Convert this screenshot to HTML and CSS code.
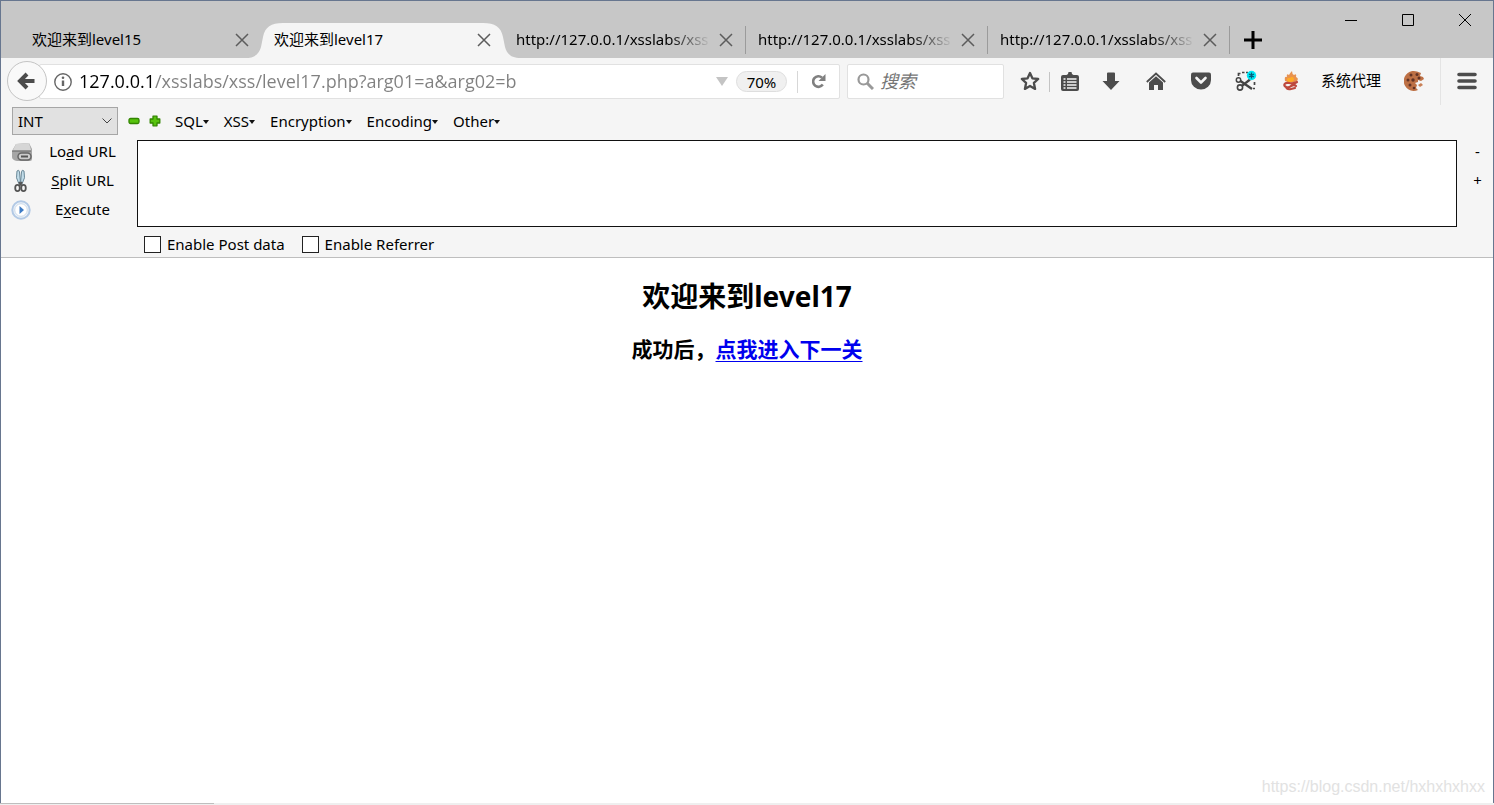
FILE: index.html
```html
<!DOCTYPE html>
<html lang="zh-CN">
<head>
<meta charset="utf-8">
<title>欢迎来到level17</title>
<link rel="stylesheet" href="styles.css">
</head>
<body>
<div class="window">
  <header class="titlebar">
    <div class="tabs">
      <div class="tab"><span class="tab-label">欢迎来到level15</span><button class="tab-close" aria-label="Close tab"><svg width="14" height="14" viewBox="0 0 14 14"><path d="M1 1L13 13M13 1L1 13"/></svg></button></div>
      <div class="tab active">
        <svg class="curve curve-left" width="38" height="35" viewBox="0 0 38 35"><path d="M0 35C10 35 14 31 16 24L18 14C20 4 26 0 38 0V35Z"/></svg>
        <svg class="curve curve-right" width="38" height="35" viewBox="0 0 38 35"><path d="M38 35C28 35 24 31 22 24L20 14C18 4 12 0 0 0V35Z"/></svg>
        <span class="tab-label">欢迎来到level17</span><button class="tab-close" aria-label="Close tab"><svg width="14" height="14" viewBox="0 0 14 14"><path d="M1 1L13 13M13 1L1 13"/></svg></button></div>
      <div class="tab divided"><span class="tab-label fade">http://127.0.0.1/xsslabs/xss</span><button class="tab-close" aria-label="Close tab"><svg width="14" height="14" viewBox="0 0 14 14"><path d="M1 1L13 13M13 1L1 13"/></svg></button></div>
      <div class="tab divided"><span class="tab-label fade">http://127.0.0.1/xsslabs/xss</span><button class="tab-close" aria-label="Close tab"><svg width="14" height="14" viewBox="0 0 14 14"><path d="M1 1L13 13M13 1L1 13"/></svg></button></div>
      <div class="tab divided"><span class="tab-label fade">http://127.0.0.1/xsslabs/xss</span><button class="tab-close" aria-label="Close tab"><svg width="14" height="14" viewBox="0 0 14 14"><path d="M1 1L13 13M13 1L1 13"/></svg></button></div>
      <button class="new-tab" aria-label="New tab"><svg width="18" height="18" viewBox="0 0 18 18"><path d="M9 0V18M0 9H18" stroke="#000" stroke-width="3"/></svg></button>
    </div>
    <div class="window-buttons">
      <button aria-label="Minimize"><svg width="14" height="14" viewBox="0 0 14 14"><path d="M1 7.500H13"/></svg></button>
      <button aria-label="Maximize"><svg width="14" height="14" viewBox="0 0 14 14"><path d="M1.500 1.500H12.500V12.500H1.500Z"/></svg></button>
      <button aria-label="Close"><svg width="14" height="14" viewBox="0 0 14 14"><path d="M1 1L13 13M13 1L1 13"/></svg></button>
    </div>
  </header>

  <nav class="navbar">
    <button class="back" aria-label="Back"><svg width="20" height="20" viewBox="0 0 20 20"><path d="M10 3L3 10L10 17M3.500 10H17.500" fill="none" stroke="#4c4c4c" stroke-width="4"/></svg></button>
    <div class="urlbar">
      <svg width="18" height="18" viewBox="0 0 18 18"><circle cx="9" cy="9" r="8.200" fill="none" stroke="#666" stroke-width="1.400"/><circle cx="9" cy="4.800" r="1.300" fill="#666"/><path d="M9 7.500V13" stroke="#666" stroke-width="2.400"/></svg>
      <input class="url" type="text" aria-label="Address" value="127.0.0.1/xsslabs/xss/level17.php?arg01=a&amp;arg02=b">
      <button class="history" aria-label="History"><svg width="12" height="9" viewBox="0 0 12 9"><path d="M0 0H12L6 9Z" fill="#c4c4c4"/></svg></button>
      <button class="zoom">70%</button>
      <button class="reload" aria-label="Reload"><svg width="14" height="15" viewBox="0 0 14 15"><path d="M10.800 10.600A5.300 5.300 0 1 1 10 3.600" fill="none" stroke="#808080" stroke-width="2.600"/><path d="M13.500 0V7H6.500Z" fill="#808080"/></svg></button>
    </div>
    <div class="searchbox">
      <svg width="17" height="17" viewBox="0 0 17 17"><circle cx="6.500" cy="6.500" r="5" fill="none" stroke="#999" stroke-width="2.200"/><path d="M10 10L16 16" stroke="#999" stroke-width="3"/></svg>
      <input class="search" type="text" aria-label="搜索" placeholder="搜索">
    </div>
    <button class="icon star" aria-label="Bookmark"><svg width="20" height="20" viewBox="0 0 20 20"><path d="M10 2L12.400 7.300L18.200 8L13.900 11.900L15.100 17.900L10 15L4.900 17.900L6.100 11.900L1.800 8L7.600 7.300Z" fill="none" stroke="#4c4c4c" stroke-width="2.300" stroke-linejoin="round"/></svg></button>
    <button class="icon list" aria-label="Library"><svg width="18" height="19" viewBox="0 0 18 19"><path d="M2 3H5.500L7 2L7.500 0H10.500L11 2L12.500 3H16A2 2 0 0 1 18 5V17A2 2 0 0 1 16 19H2A2 2 0 0 1 0 17V5A2 2 0 0 1 2 3Z" fill="#4c4c4c"/><path d="M2.500 7H4.500M6 7H15.500M2.500 10H4.500M6 10H15.500M2.500 13H4.500M6 13H15.500M2.500 16H4.500M6 16H15.500" stroke="#f5f5f5" stroke-width="1.700"/></svg></button>
    <div class="tools">
      <button class="icon" aria-label="Downloads"><svg width="18" height="19" viewBox="0 0 18 19"><path d="M6 0.500H12Q13 0.500 13 1.500V9H17.500L9 18L0.500 9H5V1.500Q5 0.500 6 0.500Z" fill="#4c4c4c"/></svg></button>
      <button class="icon" aria-label="Home"><svg width="20" height="19" viewBox="0 0 20 19"><path d="M0.800 10L10 1.500L19.200 10" fill="none" stroke="#4c4c4c" stroke-width="1.800"/><path d="M10 4.200L17 10.500V18H12V13H8V18H3V10.500Z" fill="#4c4c4c"/></svg></button>
      <button class="icon" aria-label="Pocket"><svg width="20" height="18" viewBox="0 0 20 18"><path d="M2 0.500H18Q20 0.500 20 2.500V8A10 9.500 0 0 1 0 8V2.500Q0 0.500 2 0.500Z" fill="#4c4c4c"/><path d="M5.500 6L10 10.500L14.500 6" fill="none" stroke="#f5f5f5" stroke-width="2.600" stroke-linecap="round" stroke-linejoin="round"/></svg></button>
      <button class="icon" aria-label="Capture"><svg width="22" height="22" viewBox="0 0 22 22"><g fill="none" stroke="#444"><path d="M3.500 6V3.500H5.500M7 2.500H9.500M11 2.500H13M19.500 12V15M18 18.500H20" stroke-width="1.700"/><circle cx="3.500" cy="10" r="2.200" stroke-width="1.500"/><circle cx="5" cy="17.500" r="2.600" stroke-width="1.600"/><path d="M5.500 11L17 19M7 15.800L15 9.500" stroke-width="2.300"/></g><circle cx="16.500" cy="5.500" r="4.700" fill="#00e8f5"/><path d="M16.500 2.500V8.500M14 4L19 7M19 4L14 7" stroke="#075b7b" stroke-width="1.300"/></svg></button>
      <button class="icon" aria-label="Proxy"><svg width="18" height="22" viewBox="0 0 18 22"><path d="M3 11Q2 6 5 7Q4 3 7 5Q8 3 10 1Q10 4 12 5Q15 3 14 7Q17 8 15 11Q10 14 3 11Z" fill="#e8924f"/><path d="M5 10Q5 7 8 8Q11 5 12 9Q12 12 8 12Q5 12 5 10Z" fill="#ffab26"/><path d="M15 12Q12 14 7 13C2 12 1 16 4 17Q7 18 9 16Q12 14 14 16M4 17Q5 20 9 19L13 18" fill="none" stroke="#bd483d" stroke-width="2.200" stroke-linecap="round"/></svg></button>
    </div>
    <button class="proxy-label">系统代理</button>
    <button class="icon cookie" aria-label="Cookies"><svg width="22" height="22" viewBox="0 0 22 22"><path d="M13 1.500A10 10 0 1 0 14 20L12 18L13 15L11 13L14 12L14 10L17 11L20 9L19 7L16 6L17 3Z" fill="#bd7045"/><g fill="#613326"><circle cx="7" cy="5" r="1.500"/><circle cx="13" cy="4.500" r="1.500"/><circle cx="4" cy="10" r="1.500"/><circle cx="9" cy="10" r="1.700"/><circle cx="15" cy="8" r="1.500"/><circle cx="6" cy="15" r="1.500"/><circle cx="10" cy="18" r="1.300"/></g><path d="M14 15L17 13L19 15L16 17Z" fill="#c98057"/></svg></button>
    <button class="icon menu" aria-label="Menu"><svg width="20" height="18" viewBox="0 0 20 18"><path d="M2 2.500H18M2 9H18M2 15.500H18" stroke="#4c4c4c" stroke-width="3.600" stroke-linecap="round"/></svg></button>
  </nav>

  <section class="hackbar">
    <div class="menus">
      <select class="type" aria-label="Type"><option>INT</option></select>
      <button class="mini" aria-label="Remove"><svg width="12" height="12" viewBox="0 0 12 12"><rect x="1" y="3.500" width="10" height="5" rx="1.500" fill="#57c30d" stroke="#328500" stroke-width="1.300"/></svg></button>
      <button class="mini" aria-label="Add"><svg width="12" height="12" viewBox="0 0 12 12"><path d="M4 1.200H8V4H10.800V8H8V10.800H4V8H1.200V4H4Z" fill="#57c30d" stroke="#328500" stroke-width="1.300" stroke-linejoin="round"/></svg></button>
      <div class="menu-list">
        <button>SQL<i></i></button><button>XSS<i></i></button><button>Encryption<i></i></button><button>Encoding<i></i></button><button>Other<i></i></button>
      </div>
    </div>
    <div class="editor">
      <div class="actions">
        <button><svg width="22" height="22" viewBox="0 0 22 22"><path d="M5 3L18 2L21 8V18Q21 20 19 20H6Q1 19 1 16V10Z" fill="#a6a6a6"/><path d="M5 3L18 2L20 9H2Z" fill="#d6d6d6"/><path d="M1 9.500H20V11H1Z" fill="#858585"/><rect x="7" y="12" width="13" height="7" rx="3.500" fill="#ccc" stroke="#666" stroke-width="1.500"/><path d="M10 15.500H17" stroke="#555" stroke-width="2"/></svg><span>Lo<u>a</u>d URL</span></button>
        <button><svg width="22" height="24" viewBox="0 0 22 24"><path d="M6 2Q8 0 8.500 3L9.500 14L8 15Q4 9 6 2ZM13 2Q11 0 10.500 3L9.500 14L11 15Q15 9 13 2Z" fill="#c1dce9" stroke="#6d8998"/><g fill="none" stroke="#555" stroke-width="1.800"><path d="M8 13L11 17M11 13L8 17"/><ellipse cx="6.500" cy="19" rx="2.300" ry="3.200"/><ellipse cx="12.500" cy="19" rx="2.300" ry="3.200"/></g></svg><span><u>S</u>plit URL</span></button>
        <button><svg width="22" height="22" viewBox="0 0 22 22"><circle cx="10" cy="11" r="8.700" fill="#edf3f9" stroke="#b2c9e5" stroke-width="2"/><circle cx="10" cy="11" r="6.300" fill="#fff" stroke="#ccdaea"/><path d="M8.500 7L13 11L8.500 15Z" fill="#3d7bc5"/></svg><span>E<u>x</u>ecute</span></button>
      </div>
      <textarea class="payload" aria-label="URL"></textarea>
      <div class="sizers"><button>-</button><button>+</button></div>
    </div>
    <div class="options">
      <label><input type="checkbox">Enable Post data</label>
      <label><input type="checkbox">Enable Referrer</label>
    </div>
  </section>

  <main class="page">
    <h1>欢迎来到level17</h1>
    <h2>成功后，<a href="#">点我进入下一关</a></h2>
    <span class="watermark">https://blog.csdn.net/hxhxhxhxx</span>
  </main>
  <div class="bottom-edge"><span></span></div>
</div>
</body>
</html>
```
FILE: styles.css
```css
* { box-sizing: border-box; }
body {
  margin: 0;
  background: #fff;
  color: #000;
  font: 15px/20px "Noto Sans", "Noto Sans CJK SC", sans-serif;
}
button, input, select, textarea { font: inherit; color: inherit; margin: 0; padding: 0; }
button { background: none; border: 0; display: flex; align-items: center; justify-content: center; white-space: nowrap; }
svg { display: block; flex: none; }
.window { min-height: 100vh; display: flex; flex-direction: column; border: 1px solid #67768f; border-bottom: 0; }

.titlebar { height: 57px; background: #c7c7c7; display: flex; justify-content: space-between; }
.tabs { display: flex; align-items: flex-end; padding-left: 19px; min-width: 0; }
.tab { position: relative; width: 242px; height: 35px; display: flex; align-items: center; padding: 0 13px 2px 12px; }
.tab-label { position: relative; flex: 1; min-width: 0; overflow: hidden; white-space: nowrap; padding-bottom: 2px; }
.tab-label.fade { -webkit-mask-image: linear-gradient(to right, #000 78%, transparent 100%); mask-image: linear-gradient(to right, #000 78%, transparent 100%); }
.tab-close { position: relative; margin-left: 8px; }
.tab-close svg { stroke: #5c5c5c; stroke-width: 1.5; }
.active { background: linear-gradient(#f5f5f5, #f5f5f5) center / calc(100% - 40px) 100% no-repeat; z-index: 1; }
.curve { position: absolute; top: 0; fill: #f5f5f5; }
.curve-left { left: -17px; }
.curve-right { right: -17px; }
.divided::after { content: ""; position: absolute; right: 0; top: 3px; bottom: 4px; width: 1px; background: #9b9b9b; }
.new-tab { width: 46px; height: 37px; }
.window-buttons { display: flex; height: 38px; }
.window-buttons button { width: 57px; }
.window-buttons svg { fill: none; stroke: #000; stroke-width: 1; }

.navbar { height: 47px; background: #f5f5f5; display: flex; align-items: center; padding-left: 6px; }
.back { width: 40px; height: 40px; margin-bottom: 2px; border: 1px solid #c4c4c4; border-radius: 50%; background: #f9f9f9; z-index: 1; }
.urlbar, .searchbox { height: 35px; background: #fff; border: 1px solid #e1e1e1; display: flex; align-items: center; border-radius: 2px; }
.urlbar { flex: 1; min-width: 0; margin-left: -8px; padding-left: 14px; }
.url, .search { border: 0; outline: 0; min-width: 0; flex: 1; font-size: 18px; height: 30px; padding-bottom: 2px; }
.url { font-family: "Open Sans", "Noto Sans CJK SC", sans-serif; margin-left: 7px; color: transparent; background: linear-gradient(to right, #000 76px, #808080 76px); -webkit-background-clip: text; background-clip: text; }
.zoom { width: 51px; height: 21px; border: 1px solid #dedede; border-radius: 11px; background: #f0f0f0; margin: 0 10px 0 8px; }
.reload { width: 42px; height: 22px; border-left: 1px solid #d7d7d7; }
.searchbox { width: 157px; margin: 0 5px 0 7px; padding-left: 9px; }
.search { margin-left: 6px; }
.search::placeholder { color: #757575; font-style: italic; opacity: 1; }
.icon { height: 40px; padding-bottom: 1px; }
.star { width: 41px; background: linear-gradient(#c4c4c4, #c4c4c4) right / 1px 20px no-repeat; }
.list { width: 39px; }
.tools { width: 224px; display: flex; }
.tools .icon { flex: 1; }
.proxy-label { width: 76px; padding-bottom: 4px; }
.cookie { width: 51px; }
.menu { width: 53px; height: 47px; border-left: 1px solid #e4e4e4; }

.hackbar { background: #f5f5f5; border-bottom: 1px solid #bebebe; padding: 2px 0 3px; }
.menus { display: flex; align-items: center; padding-left: 11px; }
.type {
  appearance: none; width: 106px; height: 28px; padding-left: 5px; margin-right: 10px; border: 1px solid #a6a6a6; border-radius: 0;
  background: #e1e1e1 url("data:image/svg+xml,%3Csvg xmlns='http://www.w3.org/2000/svg' width='10' height='6'%3E%3Cpath d='M.5.5L5 5L9.500.5' fill='none' stroke='%23444'/%3E%3C/svg%3E") no-repeat right 5px center;
}
.mini { width: 12px; margin-right: 9px; }
.menu-list { display: flex; gap: 15px; padding-left: 5px; }
.menu-list i { border: 3px solid transparent; border-top: 4px solid #111; border-bottom: 0; margin-top: 2px; }
.editor { display: flex; padding-top: 5px; }
.actions { width: 136px; padding: 0 17px 0 10px; }
.actions button { width: 100%; height: 29px; padding-bottom: 6px; }
.actions span { flex: 1; text-align: center; padding: 0 0 1px 12px; }
.actions u { text-underline-offset: 2px; }
.payload { flex: 1; min-width: 0; height: 87px; border: 1px solid #111; border-radius: 0; background: #fff; resize: none; outline: 0; }
.sizers { width: 36px; padding-left: 5px; }
.sizers button { width: 100%; height: 29px; padding-bottom: 7px; }
.options { display: flex; gap: 17px; padding: 7px 0 0 143px; }
.options label { display: flex; align-items: center; gap: 6px; }
.options input { appearance: none; width: 17px; height: 17px; border: 1px solid #222; background: #fff; }

.page { position: relative; flex: 1; text-align: center; padding-top: 18px; }
.page h1 { margin: 0; font-size: 28px; line-height: 40px; }
.page h2 { margin: 18px 0 0; font-size: 21px; line-height: 30px; }
.page a { color: #00e; text-decoration-thickness: 1px; text-underline-offset: 4px; }
.watermark { position: absolute; right: 8px; bottom: 6px; color: #e2e2e2; font: 16px/20px "Liberation Sans", Arial, sans-serif; }
.bottom-edge { height: 2px; margin: 0 -1px; background: #efefef; }
.bottom-edge span { display: block; width: 214px; height: 1px; background: #bebebe; }
```
